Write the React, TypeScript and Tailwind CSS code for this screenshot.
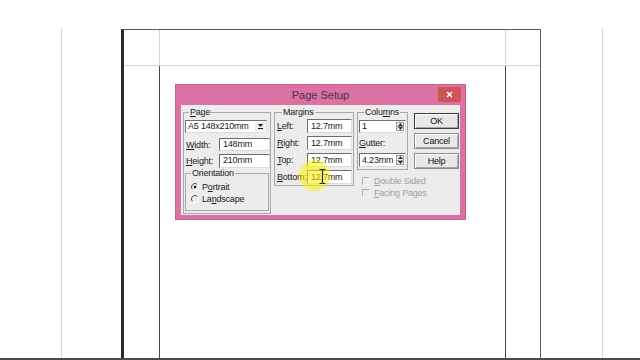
import type { ReactNode } from 'react';

function U({ c }: { c: string }) {
    return <span className="underline underline-offset-[1px] decoration-[0.5px]">{c}</span>;
}

function Field({ children, className }: { children: ReactNode; className: string }) {
    return (
        <div className={`flex items-center border border-t-[#6e6e6e] border-l-[#6e6e6e] border-r-[#dcdcdc] border-b-[#dcdcdc] bg-white pl-[3px] text-[9px] leading-none text-[#1a1a1a] ${className}`}>
            {children}
        </div>
    );
}

function Spin({ value, h }: { value: string; h: string }) {
    return (
        <div className={`flex ${h} w-[47px] items-stretch border border-t-[#6e6e6e] border-l-[#6e6e6e] border-r-[#dcdcdc] border-b-[#dcdcdc] bg-white text-[9px] leading-none text-[#1a1a1a]`}>
            <span className="flex flex-1 items-center pl-[2px]">{value}</span>
            <div className="my-[1px] mr-[1px] flex w-[8px] flex-col border border-[#9a9a9a] bg-[#ececec]">
                <div className="flex flex-1 items-center justify-center">
                    <svg width="5" height="3" viewBox="0 0 5 3"><path d="M2.5 0 L5 3 L0 3 Z" fill="#333" /></svg>
                </div>
                <div className="h-px bg-[#9a9a9a]" />
                <div className="flex flex-1 items-center justify-center">
                    <svg width="5" height="3" viewBox="0 0 5 3"><path d="M0 0 L5 0 L2.5 3 Z" fill="#333" /></svg>
                </div>
            </div>
        </div>
    );
}

function Radio({ on, children }: { on?: boolean; children: ReactNode }) {
    return (
        <div className="flex h-[11px] items-center gap-[3px] pl-[5px]">
            <svg width="8" height="8" viewBox="0 0 8 8">
                <path d="M6.5 1.5 A3.5 3.5 0 0 0 1.5 6.5" fill="none" stroke="#555" strokeWidth="1" />
                <path d="M1.5 6.5 A3.5 3.5 0 0 0 6.5 1.5" fill="none" stroke="#fff" strokeWidth="1" />
                {on && <circle cx="4" cy="4" r="1.3" fill="#111" />}
            </svg>
            <span>{children}</span>
        </div>
    );
}

function Check({ children }: { children: ReactNode }) {
    return (
        <div className="flex h-[10px] items-center gap-[4px] pl-[5px] text-[#a0a0a0]">
            <span className="h-[8px] w-[8px] border border-t-[#b0b0b0] border-l-[#b0b0b0] border-r-[#f4f4f4] border-b-[#f4f4f4] bg-[#ececec]" />
            <span>{children}</span>
        </div>
    );
}

function Btn({ children, def }: { children: ReactNode; def?: boolean }) {
    return (
        <button
            className={`flex h-[16px] w-[45px] items-center justify-center border bg-[#e8e8e8] text-[9px] leading-none text-[#111] shadow-[inset_1px_1px_0_#fff,inset_-1px_-1px_0_#a8a8a8] ${def ? 'border-[#3c3c3c]' : 'border-[#8c8c8c]'}`}
        >
            {children}
        </button>
    );
}

function PageSetup() {
    return (
        <div className="ml-[15px] mt-[18px] flex h-[136px] w-[291px] flex-col border border-[#c85d8e] bg-[#dc72a3]">
            <div className="relative flex h-[20px] items-center justify-center">
                <span className="text-[11px] text-[#4a3446]">Page Setup</span>
                <button className="absolute right-[4px] top-[2px] flex h-[15px] w-[23px] items-center justify-center bg-[#cf5456]">
                    <svg width="7" height="7" viewBox="0 0 7 7">
                        <path d="M1 1 L6 6 M6 1 L1 6" stroke="#fff" strokeWidth="1.4" />
                    </svg>
                </button>
            </div>

            <div className="relative mx-[5px] flex h-[110px] items-start bg-[#ececec] pl-[2px] pt-[2px] text-[9px] leading-[10px] tracking-[-0.2px] text-[#1a1a1a]">
                {/* Page */}
                <fieldset className="flex h-[107px] w-[88px] flex-col border border-[#a9a9a9]">
                    <legend className="ml-[5px] px-px leading-[10px]"><U c="P" />age</legend>
                    <div className="ml-[1px] mt-[3px] flex h-[13px] w-[82px] items-stretch border border-t-[#6e6e6e] border-l-[#6e6e6e] border-r-[#dcdcdc] border-b-[#dcdcdc] bg-white">
                        <span className="flex flex-1 items-center pl-[2px] leading-none">A5 148x210mm</span>
                        <div className="my-[1px] mr-[1px] flex w-[10px] flex-col items-center justify-center gap-[1px] bg-[#ececec]">
                            <svg width="5" height="3" viewBox="0 0 5 3"><path d="M0 0 L5 0 L2.5 3 Z" fill="#111" /></svg>
                            <div className="h-px w-[5px] bg-[#111]" />
                        </div>
                    </div>
                    <div className="ml-[2px] mt-[5px] flex h-[13px] items-center justify-between">
                        <span><U c="W" />idth:</span>
                        <Field className="h-[13px] w-[51px]">148mm</Field>
                    </div>
                    <div className="ml-[2px] mt-[3px] flex h-[13px] items-center justify-between">
                        <span><U c="H" />eight:</span>
                        <Field className="h-[14px] w-[51px]">210mm</Field>
                    </div>
                    <fieldset className="ml-[1px] mt-[1px] h-[43px] w-[84px] border border-[#a9a9a9]">
                        <legend className="ml-[5px] px-px leading-[10px]">Orientation</legend>
                        <div className="mt-[3px]">
                            <Radio on>P<U c="o" />rtrait</Radio>
                        </div>
                        <div className="mt-px">
                            <Radio>La<U c="n" />dscape</Radio>
                        </div>
                    </fieldset>
                </fieldset>

                {/* Margins */}
                <fieldset className="ml-[3px] flex h-[79px] w-[80px] flex-col gap-[3px] border border-[#a9a9a9]">
                    <legend className="ml-[7px] px-px leading-[10px]">Margins</legend>
                    {[
                        ['L', 'eft:', 'mt-[2px]'],
                        ['R', 'ight:', ''],
                        ['T', 'op:', ''],
                        ['B', 'ottom:', ''],
                    ].map(([k, rest, mt]) => (
                        <div key={k} className={`flex h-[14px] items-center pl-[2px] ${mt}`}>
                            <span className="w-[30px]"><U c={k} />{rest}</span>
                            <Field className="h-[14px] w-[45px]">12.7mm</Field>
                        </div>
                    ))}
                </fieldset>

                {/* Columns + checks */}
                <div className="ml-[3px] flex w-[51px] flex-col">
                    <fieldset className="flex h-[63px] flex-col border border-[#a9a9a9] pl-[1px]">
                        <legend className="ml-[5px] px-px leading-[10px]">Colu<U c="m" />ns</legend>
                        <div className="mt-[3px]">
                            <Spin value="1" h="h-[13px]" />
                        </div>
                        <span className="mt-[5px] h-[10px]"><U c="G" />utter:</span>
                        <div className="mt-[5px]">
                            <Spin value="4.23mm" h="h-[14px]" />
                        </div>
                    </fieldset>
                    <div className="mt-[6px] flex w-[110px] flex-col gap-[2px]">
                        <Check><U c="D" />ouble Sided</Check>
                        <Check><U c="F" />acing Pages</Check>
                    </div>
                </div>

                {/* Buttons */}
                <div className="ml-[6px] mt-[6px] flex flex-col gap-[4px]">
                    <Btn def>OK</Btn>
                    <Btn>Cancel</Btn>
                    <Btn>Help</Btn>
                </div>

                {/* cursor highlight */}
                <div className="pointer-events-none absolute left-[118px] top-[55px] h-[31px] w-[31px] rounded-full bg-[#fff200]/55 blur-[1.5px]" />
                <svg className="pointer-events-none absolute left-[138px] top-[64px]" width="7" height="15" viewBox="0 0 7 15">
                    <path d="M0.5 0.5 H2.5 Q3.5 0.5 3.5 2 V13 Q3.5 14.5 2.5 14.5 H0.5 M6.5 0.5 H4.5 Q3.5 0.5 3.5 2 M3.5 13 Q3.5 14.5 4.5 14.5 H6.5" fill="none" stroke="#222" strokeWidth="1.1" />
                </svg>
            </div>
        </div>
    );
}

export default function App() {
    return (
        <div className="flex h-[360px] w-[640px] flex-col overflow-hidden bg-white [font-family:'Liberation_Sans',Arial,sans-serif]">
            <div className="h-[358px] overflow-hidden pl-[61px]">
                <div className="h-full w-[542px] border-x border-[#d6d6d6]">
                    <div className="relative ml-[59px] mt-[29px] h-[400px] w-[420px] border-t border-r border-l-[3px] border-t-[#5a5a5a] border-r-[#5a5a5a] border-l-[#2a2a2a]">
                        {/* guides */}
                        <div className="pointer-events-none absolute left-0 right-0 top-[35px] h-px bg-[#d4d4d4]" />
                        <div className="pointer-events-none absolute left-[35px] top-0 h-[36px] w-px bg-[#d4d4d4]" />
                        <div className="pointer-events-none absolute left-[381px] top-0 h-[36px] w-px bg-[#d4d4d4]" />

                        <div className="ml-[35px] mt-[35px] h-[400px] w-[347px] border border-[#4a4a4a]">
                            <PageSetup />
                        </div>
                    </div>
                </div>
            </div>
            <div className="h-[2px] bg-[#4a4a4a]" />
        </div>
    );
}
